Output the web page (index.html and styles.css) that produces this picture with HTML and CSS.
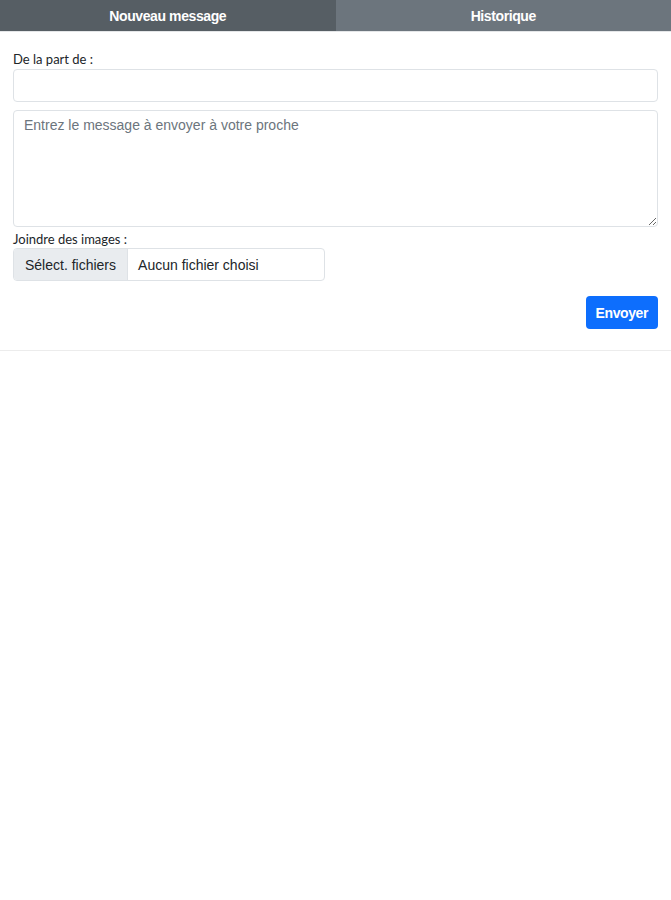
FILE: index.html
```html
<!DOCTYPE html>
<html lang="fr">
<head>
  <meta charset="UTF-8">
  <meta name="viewport" content="width=device-width, initial-scale=1">
  <title>Nouveau message</title>
  <link rel="stylesheet" href="styles.css">
</head>
<body>
  <nav class="tabs">
    <div class="tab active">Nouveau message</div>
    <div class="tab">Historique</div>
  </nav>

  <main class="panel">
    <form class="message-form">
      <label class="field-label" for="sender">De la part de :</label>
      <input type="text" id="sender" class="field">

      <textarea class="field message" placeholder="Entrez le message à envoyer à votre proche"></textarea>

      <label class="field-label">Joindre des images :</label>
      <div class="file-picker">
        <span class="file-button">Sélect. fichiers</span>
        <span class="file-name">Aucun fichier choisi</span>
      </div>

      <div class="actions">
        <button type="button" class="send">Envoyer</button>
      </div>
    </form>
  </main>
</body>
</html>
```

FILE: styles.css
```css
:root {
  --tab-active: #565e64;
  --tab: #6c757d;
  --border: #dee2e6;
  --accent: #0d6efd;
  --text: #212529;
  --muted: #6c757d;
}

* {
  margin: 0;
  padding: 0;
  box-sizing: border-box;
}

body {
  background: #fff;
  color: var(--text);
  font-family: 'Liberation Sans', Arial, sans-serif;
}

/* Tabs */
.tabs {
  display: flex;
  height: 32px;
  border-bottom: 1px solid #e4e6e8;
}

.tab {
  flex: 1;
  display: flex;
  align-items: center;
  justify-content: center;
  background: var(--tab);
  color: #fff;
  font-size: 14px;
  font-weight: bold;
  letter-spacing: -0.4px;
}

.tab.active {
  background: var(--tab-active);
}

/* Form */
.panel {
  padding: 18px 13px 21px;
  border-bottom: 1px solid #ececec;
}

.message-form {
  display: flex;
  flex-direction: column;
}

.field-label {
  font-family: Lato, 'Noto Sans', sans-serif;
  font-size: 13px;
  line-height: 18px;
  margin-bottom: 1px;
}

.field {
  width: 100%;
  height: 33px;
  border: 1px solid var(--border);
  border-radius: 4px;
  font-family: inherit;
  font-size: 14px;
  padding: 6px 10px;
  color: var(--text);
}

.message {
  height: 117px;
  margin-top: 8px;
  margin-bottom: 3px;
  resize: vertical;
}

.message::placeholder {
  color: var(--muted);
}

.file-picker {
  display: flex;
  width: 312px;
  height: 33px;
  margin-top: -1px;
  border: 1px solid var(--border);
  border-radius: 4px;
  overflow: hidden;
  font-size: 14px;
}

.file-button {
  display: flex;
  align-items: center;
  padding: 0 11px;
  background: #e9ecef;
  border-right: 1px solid var(--border);
}

.file-name {
  display: flex;
  align-items: center;
  padding: 0 10px;
}

.actions {
  display: flex;
  justify-content: flex-end;
  margin-top: 15px;
}

.send {
  background: var(--accent);
  color: #fff;
  border: none;
  border-radius: 4px;
  height: 33px;
  padding: 0 10px;
  font-family: inherit;
  font-size: 14px;
  font-weight: bold;
  letter-spacing: -0.4px;
  cursor: pointer;
}
```
